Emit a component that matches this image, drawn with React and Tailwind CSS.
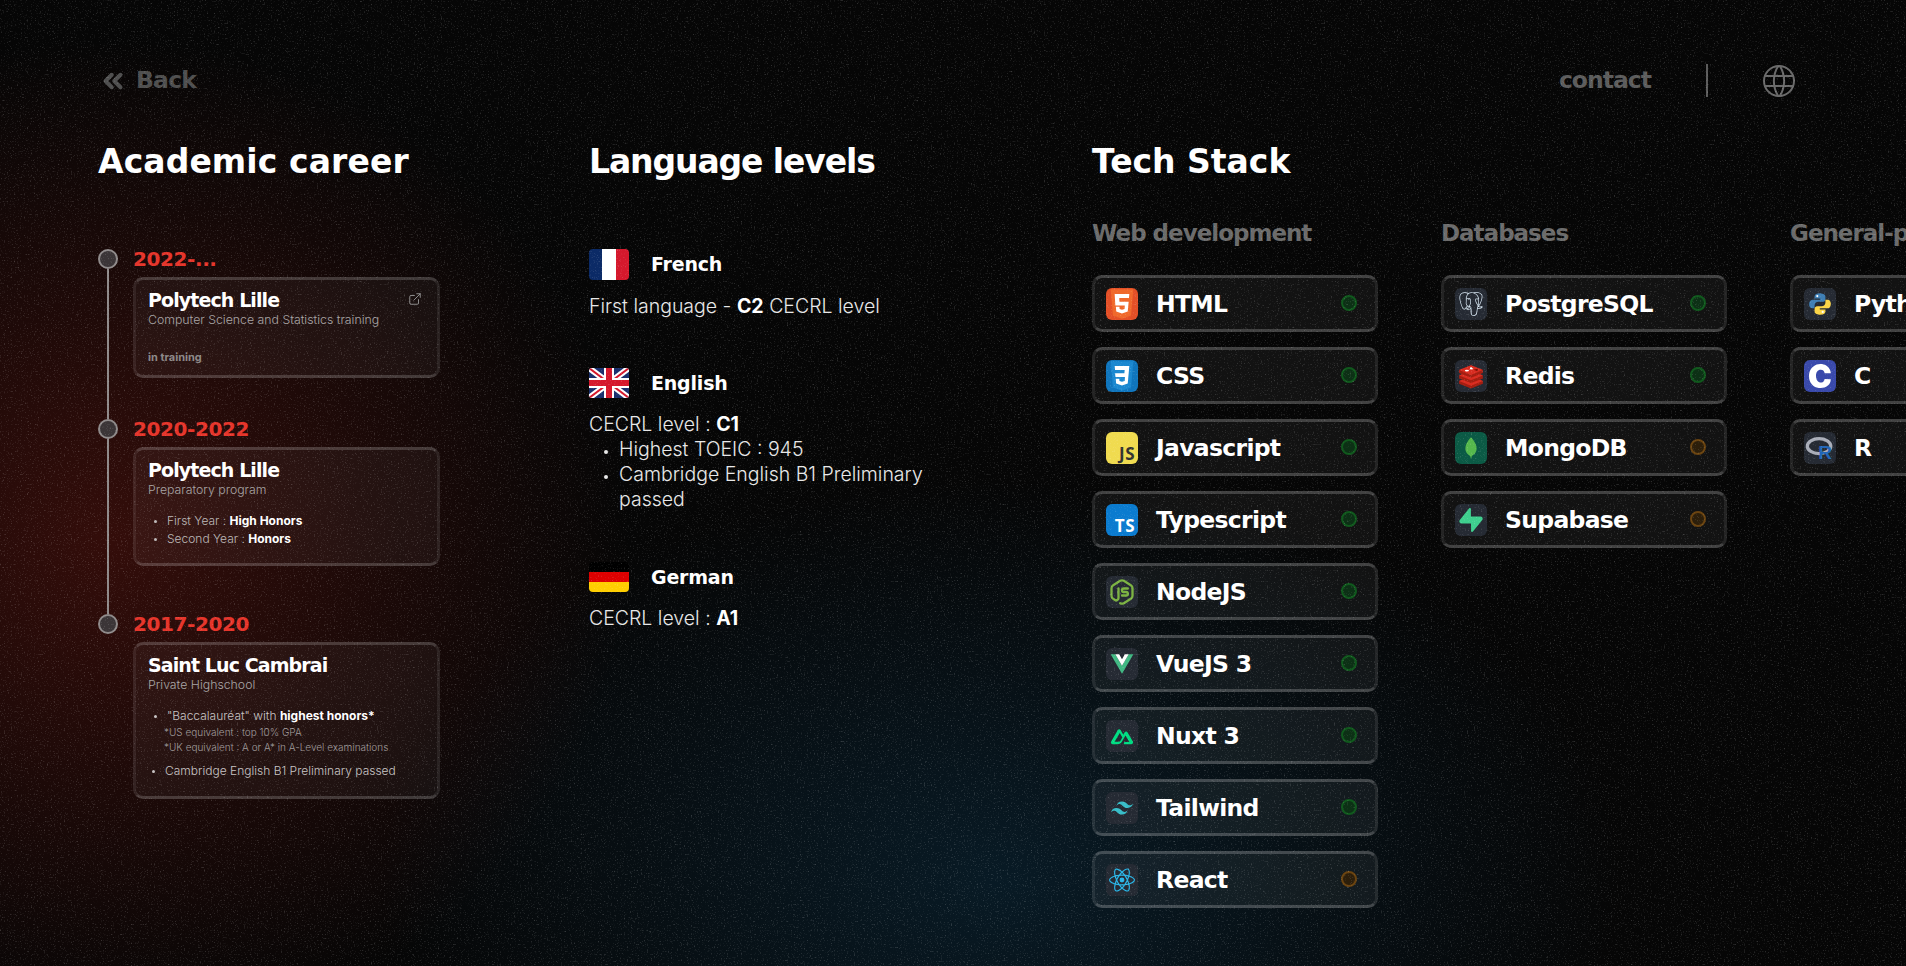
import React from 'react';
import { ChevronsLeft, ExternalLink } from 'lucide-react';
import { TbBrandNodejs, TbWorld } from 'react-icons/tb';
import { SiC, SiPostgresql, SiReact, SiSupabase, SiTailwindcss } from 'react-icons/si';

const display = "font-['DejaVu_Sans',sans-serif] font-bold";

function Html5() {
  return (
    <svg viewBox="0 0 24 24" className="h-full w-full">
      <path d="M3.5 1l1.7 19.6L12 23l6.8-2.4L20.5 1z" fill="#f0692c" />
      <path fill="#fff" d="M6.5 4.5h11l-.3 3H9.9l.2 2.8h6.9l-.7 7.4-4.3 1.4-4.3-1.4-.3-3.6h2.7l.1 1.7 1.8.5 1.9-.5.2-2.7H7z" />
    </svg>
  );
}

function Css3() {
  return (
    <svg viewBox="0 0 24 24" className="h-full w-full">
      <path d="M3.5 1l1.7 19.6L12 23l6.8-2.4L20.5 1z" fill="#1b88d0" />
      <path fill="#fff" d="M6.5 4.5h11l-1.2 13.2-4.3 1.4-4.4-1.4-.3-3.6h2.7l.1 1.7 1.9.5 2-.5.2-3H7.1l-.3-2.8h7l.2-2.5H6.8z" />
    </svg>
  );
}

function Vue() {
  return (
    <svg viewBox="0 0 24 24" className="h-full w-full">
      <path d="M1.5 3h4.3L12 13.6 18.2 3h4.3L12 21z" fill="#41b883" />
      <path d="M5.8 3h3.6L12 7.5 14.6 3h3.6L12 13.6z" fill="#fff" />
    </svg>
  );
}

function Nuxt() {
  return (
    <svg viewBox="0 0 24 24" fill="#00dc82" className="h-full w-full">
      <path d="M13.4 19H20a1.5 1.5 0 0 0 1.3-2.2L16.8 9a1.5 1.5 0 0 0-2.6 0l-1.1 1.9L10.9 7a1.5 1.5 0 0 0-2.6 0L2.7 16.8A1.5 1.5 0 0 0 4 19h4.2c1.7 0 2.9-.7 3.7-2.1l2-3.5 1.1-1.9 3.3 5.7H14zm-4.8-2H5.7l4.4-7.6 2.2 3.8-1.5 2.6c-.6.9-1.2 1.2-2.2 1.2z" />
    </svg>
  );
}

function Leaf() {
  return (
    <svg viewBox="0 0 24 24" className="h-full w-full">
      <path d="M12 2S6.8 7 6.8 12.5c0 3.7 2.9 6 4.5 7l.7 2.7.7-2.7c1.6-1 4.5-3.3 4.5-7C17.2 7 12 2 12 2z" fill="#55b84c" />
    </svg>
  );
}

function Redis() {
  return (
    <svg viewBox="0 0 24 24" className="h-full w-full">
      <path d="M1 16.5L12 12l11 4.5v2.7L12 23.5 1 19.2z" fill="#a41e11" />
      <path d="M1 16.5L12 12l11 4.5L12 21z" fill="#d82c20" />
      <path d="M1 11.5L12 7l11 4.5v2.7L12 18.5 1 14.2z" fill="#a41e11" />
      <path d="M1 11.5L12 7l11 4.5L12 16z" fill="#d82c20" />
      <path d="M1 6.5L12 2l11 4.5v2.7L12 13.5 1 9.2z" fill="#a41e11" />
      <path d="M1 6.5L12 2l11 4.5L12 11z" fill="#d82c20" />
      <path d="M11 4.3l1.4-.6.5.8 1.5.3-1.2.6.3.9-1.5-.6-1.6.2.7-.7z" fill="#fff" />
      <ellipse cx="8.2" cy="7" rx="1.9" ry=".8" fill="#fff" />
      <path d="M14.5 6.2l3.7-.9v2.2z" fill="#7a0c00" />
    </svg>
  );
}

function Python() {
  return (
    <svg viewBox="0 0 24 24" className="h-full w-full">
      <path fill="#3f7fb5" d="M12 2C9 2 7 3 7 5v2h5.2v1H5C3 8 2 10 2 12.2S3 16 5 16h2v-2.6c0-2 1.5-3.4 3.5-3.4h4c1.5 0 2.5-1 2.5-2.5V5c0-2-3-3-6-3z" />
      <path fill="#fbd547" d="M12 22c3 0 5-1 5-3v-2h-5.2v-1H19c2 0 3-2 3-4.2S21 8 19 8h-2v2.6c0 2-1.5 3.4-3.5 3.4h-4C8 14 7 15 7 16.5V19c0 2 3 3 5 3z" />
      <circle cx="9.5" cy="4.7" r="1" fill="#fff" />
      <circle cx="14.5" cy="19.3" r="1" fill="#fff" />
    </svg>
  );
}

function RLang() {
  return (
    <div className="relative h-full w-full">
      <svg viewBox="0 0 32 32" className="h-full w-full">
        <ellipse cx="15" cy="14" rx="12.5" ry="8" fill="none" stroke="#a9adb8" strokeWidth="3.5" />
      </svg>
      <span className="absolute right-[3px] bottom-[1px] font-['Liberation_Sans',sans-serif] text-[19px] leading-none font-bold text-[#2266b8]">R</span>
    </div>
  );
}

function BadgeText({ children }) {
  return (
    <span className="flex h-full w-full items-end justify-end pr-[3px] pb-[2px] font-['Open_Sans',sans-serif] text-[17px] leading-[17px] font-bold tracking-[0.5px]">
      {children}
    </span>
  );
}

const web = [
  { name: 'HTML', box: 'bg-[#e34f26]', icon: <Html5 /> },
  { name: 'CSS', box: 'bg-[#0f75bd]', icon: <Css3 /> },
  { name: 'Javascript', box: 'bg-[#f0db4f] text-[#323330]', icon: <BadgeText>JS</BadgeText> },
  { name: 'Typescript', box: 'bg-[#0a7bcf] text-white', icon: <BadgeText>TS</BadgeText> },
  { name: 'NodeJS', box: 'bg-[#252a33] text-[#7cb342] p-[2px]', icon: <TbBrandNodejs className="h-full w-full" /> },
  { name: 'VueJS 3', box: 'bg-[#252a33] p-[3px]', icon: <Vue /> },
  { name: 'Nuxt 3', box: 'bg-[#252a33] p-[2px]', icon: <Nuxt /> },
  { name: 'Tailwind', box: 'bg-[#252a33] text-[#38bdc8] p-[5px]', icon: <SiTailwindcss className="h-full w-full" /> },
  { name: 'React', box: 'bg-[#252a33] text-[#29b6e8] p-[3px]', icon: <SiReact className="h-full w-full" />, amber: true },
];

const databases = [
  { name: 'PostgreSQL', box: 'bg-[#252a33] text-[#d7e6f2] p-[4px]', icon: <SiPostgresql className="h-full w-full" /> },
  { name: 'Redis', box: 'bg-[#252a33] p-[3px]', icon: <Redis /> },
  { name: 'MongoDB', box: 'bg-[#0b5a45] p-[3px]', icon: <Leaf />, amber: true },
  { name: 'Supabase', box: 'bg-[#252a33] text-[#3ecf8e] p-[4px]', icon: <SiSupabase className="h-full w-full" />, amber: true },
];

const general = [
  { name: 'Python', box: 'bg-[#252a33] p-[3px]', icon: <Python /> },
  { name: 'C', box: 'bg-[#3949ab] text-white p-[4px]', icon: <SiC className="h-full w-full" /> },
  { name: 'R', box: 'bg-[#252a33] p-[1px]', icon: <RLang /> },
];

function TechCard({ item }) {
  return (
    <div className="flex h-[57px] w-[286px] shrink-0 items-center rounded-[10px] border-[3px] border-x-white/[0.08] border-y-white/20 bg-white/[0.05] pr-[18px] pl-[11px]">
      <div className={`h-8 w-8 shrink-0 overflow-hidden rounded-[6px] ${item.box}`}>{item.icon}</div>
      <span className={`${display} mt-px ml-[18px] flex-1 text-[23.5px] leading-7 tracking-[-0.7px] text-white`}>{item.name}</span>
      <span className={item.amber
        ? 'mb-[2px] h-4 w-4 rounded-full border-2 border-[#6b4410] bg-[#2c1e0a]'
        : 'mb-[2px] h-4 w-4 rounded-full border-2 border-[#10591d] bg-[#0c3015]'} />
    </div>
  );
}

function TechColumn({ title, items }) {
  return (
    <div className="w-[286px] shrink-0">
      <h3 className={`${display} text-[23px] leading-7 tracking-[-1px] whitespace-nowrap text-[#6b6b6b]`}>{title}</h3>
      <div className="mt-[28px] flex flex-col gap-[15px]">
        {items.map((item) => <TechCard key={item.name} item={item} />)}
      </div>
    </div>
  );
}

function TimelineItem({ year, last, pad, children }) {
  return (
    <div className="flex">
      <div className="flex w-5 shrink-0 flex-col items-center">
        <div className="h-5 w-5 shrink-0 rounded-full border-2 border-[#8f8a8a] bg-[#3b3537]" />
        {!last && <div className="w-0.5 flex-1 bg-[#8f8a8a]" />}
      </div>
      <div className={`ml-[15px] w-[307px] ${pad}`}>
        <div className={`${display} text-[20px] leading-5 tracking-[-0.4px] text-[#e5352b]`}>{year}</div>
        <div className="mt-2 rounded-[10px] border-[3px] border-x-white/[0.07] border-y-white/[0.17] bg-white/[0.04] px-[12px]">
          {children}
        </div>
      </div>
    </div>
  );
}

function CardTitle({ children }) {
  return <div className={`${display} text-[19px] leading-6 tracking-[-0.9px] text-white`}>{children}</div>;
}

export default function App() {
  return (
    <div className="relative h-screen w-full overflow-hidden bg-[#060606] bg-[radial-gradient(ellipse_520px_500px_at_110px_540px,rgba(120,24,16,0.4),transparent),radial-gradient(ellipse_620px_400px_at_1000px_880px,rgba(12,62,92,0.36),transparent)] font-['Inter',sans-serif] text-white">
      <div className="pt-16 pl-[98px]">
        {/* Top bar */}
        <div className="flex h-[33px] items-center pr-[107px]">
          <div className="flex items-center text-[#4f4f4f]">
            <ChevronsLeft size={30} strokeWidth={3.2} />
            <span className={`${display} ml-[8px] text-[23.5px] tracking-[-0.8px]`}>Back</span>
          </div>
          <div className={`${display} ml-auto text-[23.5px] tracking-[-1px] text-[#5c5c5c]`}>contact</div>
          <div className="mr-[51px] ml-[55px] h-[33px] w-0.5 bg-[#5c5c5c]" />
          <TbWorld size={40} strokeWidth={1.2} className="text-[#6a6a6a]" />
        </div>

        <div className="mt-[45px] flex">
          {/* Academic career */}
          <section className="w-[491px] shrink-0">
            <h2 className={`${display} text-[33px] leading-10 tracking-[0.1px] text-white`}>Academic career</h2>
            <div className="mt-[67px]">
              <TimelineItem year="2022-..." pad="pb-[41px]">
                <div className="flex items-start justify-between pt-[8px]">
                  <CardTitle>Polytech Lille</CardTitle>
                  <ExternalLink size={14} strokeWidth={1.5} className="mt-1 mr-[3px] text-[#9a9a9a]" />
                </div>
                <p className="text-[12.3px] leading-4 font-light text-[#a8a4a4]">Computer Science and Statistics training</p>
                <p className="mt-[21px] pb-[10px] text-[11px] leading-4 font-bold text-[#8c8888]">in training</p>
              </TimelineItem>
              <TimelineItem year="2020-2022" pad="pb-[48px]">
                <div className="pt-[8px]"><CardTitle>Polytech Lille</CardTitle></div>
                <p className="text-[12.3px] leading-4 font-light text-[#a8a4a4]">Preparatory program</p>
                <ul className="mt-[14px] ml-[19px] list-disc pb-[15px] text-[12px] leading-[18px] font-light text-[#bdb9b9] marker:text-[9px]">
                  <li>First Year : <b className="font-bold text-white">High Honors</b></li>
                  <li>Second Year : <b className="font-bold text-white">Honors</b></li>
                </ul>
              </TimelineItem>
              <TimelineItem year="2017-2020" last>
                <div className="pt-[8px]"><CardTitle>Saint Luc Cambrai</CardTitle></div>
                <p className="text-[12.3px] leading-4 font-light text-[#a8a4a4]">Private Highschool</p>
                <ul className="mt-[14px] ml-[19px] list-disc pb-[16px] text-[12px] leading-[18px] font-light text-[#c8c4c4] marker:text-[9px]">
                  <li>
                    "Baccalauréat" with <b className="font-bold text-white">highest honors*</b>
                    <p className="-ml-[3px] text-[10px] leading-[15px] text-[#a09c9c]">*US equivalent : top 10% GPA</p>
                    <p className="-ml-[3px] text-[10px] leading-[15px] text-[#a09c9c]">*UK equivalent : A or A* in A-Level examinations</p>
                  </li>
                  <li className="mt-[7px] -ml-[2px]">Cambridge English B1 Preliminary passed</li>
                </ul>
              </TimelineItem>
            </div>
          </section>

          {/* Languages */}
          <section className="w-[503px] shrink-0">
            <h2 className={`${display} text-[33px] leading-10 tracking-[-1.1px] text-white`}>Language levels</h2>
            <div className="mt-[67px] flex flex-col gap-[49px] text-[19.5px] leading-[25px] font-light text-[#e8e8e8]">
              <div>
                <div className="flex items-center">
                  <div className="flex h-[31px] w-10 overflow-hidden rounded-[4px]">
                    <div className="flex-1 bg-[#0b2a66]" />
                    <div className="flex-1 bg-white" />
                    <div className="flex-1 bg-[#d5182c]" />
                  </div>
                  <span className={`${display} ml-[22px] text-[19px] tracking-[-0.2px] text-white`}>French</span>
                </div>
                <p className="mt-[14px]">First language - <b className="font-bold text-white">C2</b> CECRL level</p>
              </div>
              <div className="mb-px">
                <div className="flex items-center">
                  <svg viewBox="0 0 40 30" className="h-[30px] w-10 rounded-[3px]">
                    <rect width="40" height="30" fill="#1a2f6c" />
                    <path d="M0 0L40 30M40 0L0 30" stroke="#fff" strokeWidth="6" />
                    <path d="M0 0L40 30M40 0L0 30" stroke="#d5182c" strokeWidth="2" />
                    <path d="M20 0V30M0 15H40" stroke="#fff" strokeWidth="10" />
                    <path d="M20 0V30M0 15H40" stroke="#d5182c" strokeWidth="6" />
                  </svg>
                  <span className={`${display} ml-[22px] text-[19px] tracking-[-0.2px] text-white`}>English</span>
                </div>
                <p className="mt-[14px]">CECRL level : <b className="font-bold text-white">C1</b></p>
                <ul className="ml-[30px] w-[340px] list-disc marker:text-[13px]">
                  <li>Highest TOEIC : 945</li>
                  <li>Cambridge English B1 Preliminary passed</li>
                </ul>
              </div>
              <div>
                <div className="flex items-center">
                  <div className="flex h-[30px] w-10 flex-col overflow-hidden rounded-[4px]">
                    <div className="flex-1 bg-black" />
                    <div className="flex-1 bg-[#dd0000]" />
                    <div className="flex-1 bg-[#ffce00]" />
                  </div>
                  <span className={`${display} ml-[22px] text-[19px] tracking-[-0.2px] text-white`}>German</span>
                </div>
                <p className="mt-[14px]">CECRL level : <b className="font-bold text-white">A1</b></p>
              </div>
            </div>
          </section>

          {/* Tech stack */}
          <section className="shrink-0">
            <h2 className={`${display} text-[33px] leading-10 text-white`}>Tech Stack</h2>
            <div className="mt-[37px] flex gap-[63px]">
              <TechColumn title="Web development" items={web} />
              <TechColumn title="Databases" items={databases} />
              <TechColumn title="General-purpose" items={general} />
            </div>
          </section>
        </div>
      </div>

      {/* Grain over the whole page */}
      <svg className="pointer-events-none absolute inset-0 h-full w-full opacity-25">
        <filter id="grain">
          <feTurbulence type="fractalNoise" baseFrequency="0.7" numOctaves="3" seed="4" />
          <feColorMatrix values="0 0 0 0 1  0 0 0 0 1  0 0 0 0 1  2.4 0 0 0 -1.4" />
        </filter>
        <rect width="100%" height="100%" filter="url(#grain)" />
      </svg>
    </div>
  );
}
